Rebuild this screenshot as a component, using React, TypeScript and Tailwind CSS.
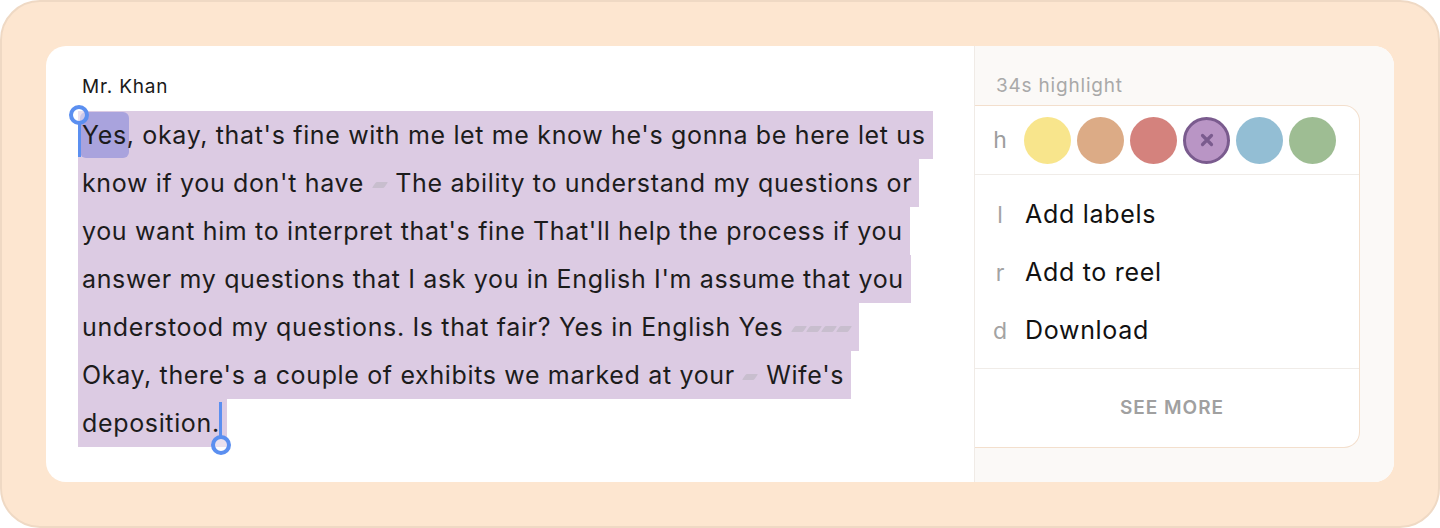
const lines: string[][] = [
  ["Yes", ", okay, that's fine with me let me know he's gonna be here let us"],
  ["know if you don't have ", "#1", " The ability to understand my questions or"],
  ["you want him to interpret that's fine That'll help the process if you"],
  ["answer my questions that I ask you in English I'm assume that you"],
  ["understood my questions. Is that fair? Yes in English Yes ", "#4"],
  ["Okay, there's a couple of exhibits we marked at your ", "#1", " Wife's"],
  ["deposition."],
];

const swatches = [
  { color: "bg-[#f8e58c]" },
  { color: "bg-[#dcab86]" },
  { color: "bg-[#d4827d]" },
  { color: "bg-[#b995c5]", active: true },
  { color: "bg-[#93bed4]" },
  { color: "bg-[#9ebd93]" },
];

const actions = [
  { key: "l", label: "Add labels" },
  { key: "r", label: "Add to reel" },
  { key: "d", label: "Download" },
];

function Gap({ count }: { count: number }) {
  return (
    <span className="inline-flex items-center gap-[3px] px-[2px] align-middle">
      {Array.from({ length: count }).map((_, i) => (
        <span key={i} className="inline-block h-[6px] w-[12px] -skew-x-[35deg] rounded-[1px] bg-[#c8bece]" />
      ))}
    </span>
  );
}

function Handle({ end }: { end?: boolean }) {
  return end ? (
    <span className="absolute right-[-4px] top-[3px] flex flex-col items-center">
      <span className="h-[34px] w-[3px] bg-[#5b8ff0]" />
      <span className="-mt-[1px] h-[20px] w-[20px] rounded-full border-[4px] border-[#5b8ff0] bg-white/40" />
    </span>
  ) : (
    <span className="absolute left-[-9px] top-[-6px] flex flex-col items-center">
      <span className="h-[20px] w-[20px] rounded-full border-[4px] border-[#5b8ff0] bg-white/40" />
      <span className="-mt-[1px] h-[33px] w-[3px] bg-[#5b8ff0]" />
    </span>
  );
}

export default function App() {
  return (
    <div className="h-[528px] w-[1440px] bg-white font-['Inter',sans-serif]">
      <div className="flex h-full w-full items-center justify-center rounded-[40px] border-2 border-[#efd9c4] bg-[#fde6d0]">
        <div className="flex h-[436px] w-[1348px] overflow-hidden rounded-[20px] bg-white">
          <div className="w-[928px] pl-[32px] pt-[27px]">
            <p className="pl-[4px] text-[19px] leading-[27px] tracking-[0.8px] text-[#1a1a1a]">Mr. Khan</p>
            <div className="mt-[11px] text-[25px] leading-[48px] tracking-[0.65px] text-[#1c1c1c]">
              {lines.map((parts, i) => (
                <div key={i} className="h-[48px]">
                  <span className="relative inline-block h-[48px] bg-[#dccbe3] pl-[4px] pr-[7px]">
                    {i === 0 && <Handle />}
                    {parts.map((p, j) =>
                      p.startsWith("#") ? (
                        <Gap key={j} count={Number(p.slice(1))} />
                      ) : i === 0 && j === 0 ? (
                        <span key={j} className="-mx-[2px] rounded-md bg-[#a9a3dd] px-[2px] py-[8px]">
                          {p}
                        </span>
                      ) : (
                        <span key={j}>{p}</span>
                      )
                    )}
                    {i === lines.length - 1 && <Handle end />}
                  </span>
                </div>
              ))}
            </div>
          </div>
          <div className="flex-1 border-l border-[#f0ebe6] bg-[#fbf9f7] pt-[29px]">
            <p className="pl-[21px] text-[19px] leading-[22px] tracking-[0.8px] text-[#a9a9a9]">34s highlight</p>
            <div className="mt-[8px] mr-[34px] rounded-r-2xl border-y border-r border-[#f3dfcd] bg-white">
              <div className="flex h-[69px] items-center border-b border-[#f0ece8] pl-[10px]">
                <span className="w-[30px] text-center text-[23px] text-[#9d9d9d]">h</span>
                <div className="ml-[9px] flex gap-[6px]">
                  {swatches.map((s, i) => (
                    <span
                      key={i}
                      className={`flex h-[47px] w-[47px] items-center justify-center rounded-full ${s.color} ${
                        s.active ? "border-[3px] border-[#7a5b8e]" : ""
                      }`}
                    >
                      {s.active && (
                        <svg width="14" height="14" viewBox="0 0 14 14">
                          <path d="M2.5 2.5l9 9M11.5 2.5l-9 9" stroke="#7a5b8e" strokeWidth="3.2" strokeLinecap="round" />
                        </svg>
                      )}
                    </span>
                  ))}
                </div>
              </div>
              <div className="border-b border-[#f0ece8] pb-[8px] pt-[11px]">
                {actions.map((a) => (
                  <div key={a.key} className="flex h-[58px] items-center pl-[10px]">
                    <span className="w-[30px] text-center text-[23px] text-[#a3a3a3]">{a.key}</span>
                    <span className="ml-[10px] text-[25px] tracking-[0.7px] text-[#111]">{a.label}</span>
                  </div>
                ))}
              </div>
              <div className="flex h-[78px] items-center justify-center pl-[10px]">
                <span className="text-[19px] font-semibold tracking-[1px] text-[#a0a0a0]">SEE MORE</span>
              </div>
            </div>
          </div>
        </div>
      </div>
    </div>
  );
}
